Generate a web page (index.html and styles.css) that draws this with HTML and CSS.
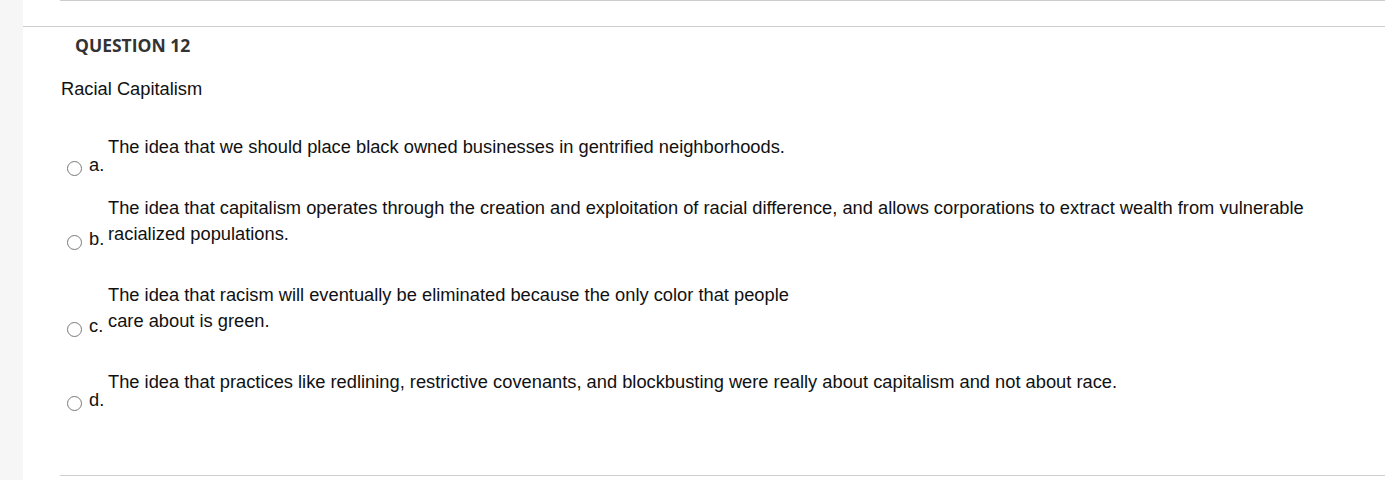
FILE: index.html
```html
<!DOCTYPE html>
<html>
<head>
<meta charset="utf-8">
<link rel="stylesheet" href="styles.css">
</head>
<body>
<div class="page">
  <div class="sidebar"></div>
  <div class="main">
    <div class="rule-top"></div>
    <div class="rule-full"></div>
    <h2 class="qhead">QUESTION 12</h2>
    <div class="qtext">Racial Capitalism</div>
    <div class="options">
      <div class="opt">
        <span class="radio"></span>
        <span class="lbl">a.</span>
        <div class="ans">The idea that we should place black owned businesses in gentrified neighborhoods.</div>
      </div>
      <div class="opt">
        <span class="radio"></span>
        <span class="lbl">b.</span>
        <div class="ans">The idea that capitalism operates through the creation and exploitation of racial difference, and allows corporations to extract wealth from vulnerable racialized populations.</div>
      </div>
      <div class="opt">
        <span class="radio"></span>
        <span class="lbl">c.</span>
        <div class="ans">The idea that racism will eventually be eliminated because the only color that people<br>care about is green.</div>
      </div>
      <div class="opt">
        <span class="radio"></span>
        <span class="lbl">d.</span>
        <div class="ans">The idea that practices like redlining, restrictive covenants, and blockbusting were really about capitalism and not about race.</div>
      </div>
    </div>
    <div class="rule-bottom"></div>
  </div>
</div>
</body>
</html>
```
FILE: styles.css
```css
html, body {
  margin: 0;
  padding: 0;
  background: #fff;
}
.page {
  display: flex;
  min-height: 480px;
}
.sidebar {
  width: 23px;
  flex: none;
  background: #f6f6f6;
}
.main {
  flex: 1;
  padding-right: 1px;
  font-family: "Liberation Sans", Arial, sans-serif;
  color: #111;
}
.rule-top {
  margin-left: 37px;
  border-top: 1px solid #cdcdcd;
  height: 25px;
}
.rule-full {
  border-top: 1px solid #cdcdcd;
}
.qhead {
  margin: 6px 0 0 52px;
  font-family: "Open Sans", sans-serif;
  font-weight: 700;
  font-size: 17.5px;
  line-height: 24px;
  color: #333;
}
.qtext {
  margin: 22px 0 0 38px;
  font-size: 18.3px;
  line-height: 20px;
}
.options {
  margin-top: 35px;
  padding-left: 44px;
}
.opt {
  display: grid;
  grid-template-columns: 22px 19px 1fr;
  align-items: center;
  font-size: 18.3px;
}
.radio {
  grid-column: 1;
  grid-row: 1;
  width: 15px;
  height: 15px;
  box-sizing: border-box;
  border: 1px solid #7a7a7a;
  border-radius: 50%;
  align-self: center;
  margin-top: 8px;
}
.lbl {
  grid-column: 2;
  grid-row: 1;
  line-height: 20px;
}
.ans {
  grid-column: 3;
  grid-row: 1;
  line-height: 26px;
  padding-bottom: 35px;
  max-width: 1220px;
}
.rule-bottom {
  margin: 45px 0 0 37px;
  border-top: 1px solid #cdcdcd;
}
```
